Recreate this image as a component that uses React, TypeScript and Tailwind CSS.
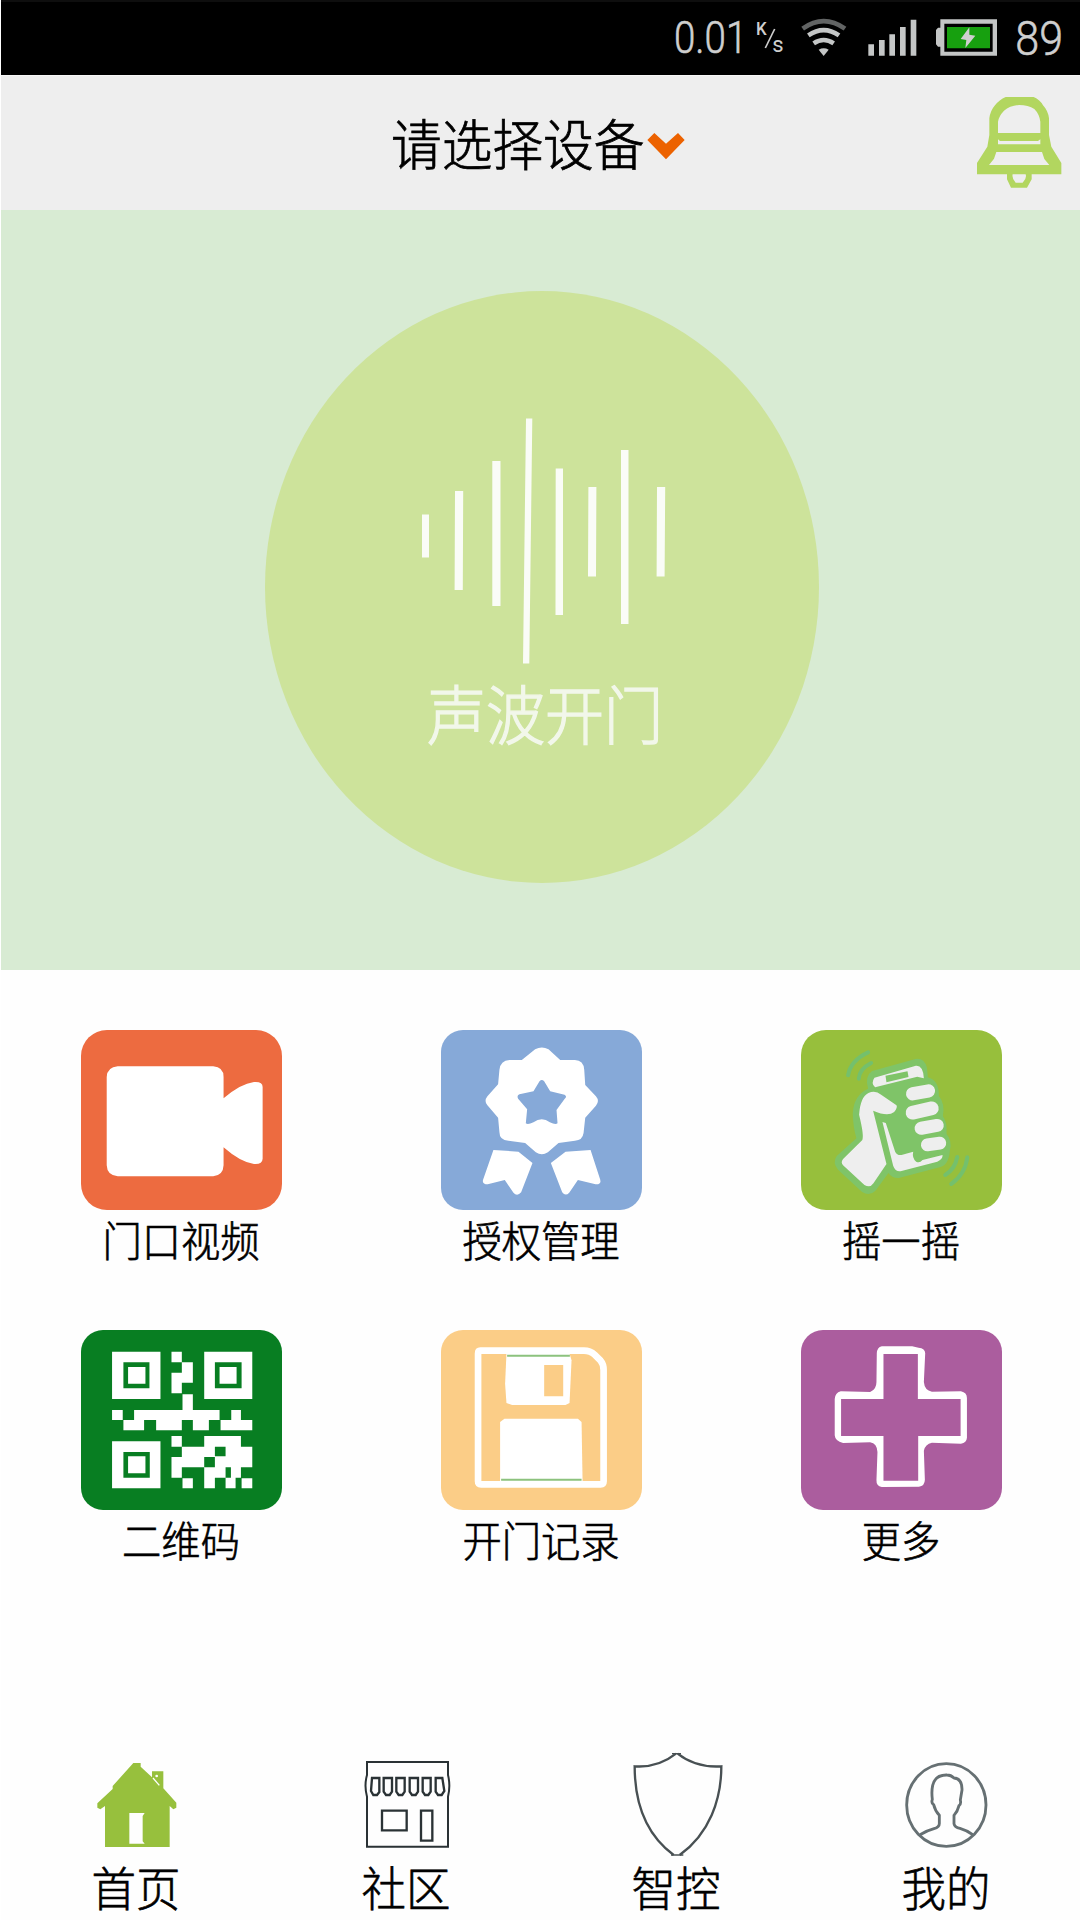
import type { ReactNode } from 'react';

const cjk = "font-['Noto_Sans_CJK_SC',sans-serif]";

function StatusBar() {
  return (
    <div className="flex h-[75px] items-start justify-end border-t-2 border-[#0e0e0e] bg-black pr-[17px] font-['Roboto',sans-serif] font-light text-[#cfcfcf]">
      <span className="mt-[8px] origin-center scale-y-[1.13] text-[38.500px] leading-[56px] [-webkit-text-stroke:0.5px_#cfcfcf]">0.01</span>
      <svg className="mt-[16px] ml-[8px] h-[38px] w-[30px]" viewBox="345 54 90 114" fill="#cfcfcf">
        <text x="348" y="106" fontSize="54" fontWeight="500" textLength="32" lengthAdjust="spacingAndGlyphs">K</text>
        <path d="M376 144L404 87" stroke="#cfcfcf" strokeWidth="5" />
        <text x="397" y="157" fontSize="66" fontWeight="400">s</text>
      </svg>
      <svg className="mt-[16px] ml-[16px] h-[39px] w-[46px]" viewBox="483 54 138 117" fill="none" stroke="#c4c6c6" strokeWidth="14">
        <path d="M488 86Q551 41 615 86" stroke="#626464" />
        <path d="M505 106Q551 75 597 106" />
        <path d="M521 130Q551 110 581 130" />
        <path d="M536 149Q551 141 566 149L551 168Z" fill="#c4c6c6" stroke="none" />
      </svg>
      <svg className="mt-[17px] ml-[21px] h-[37px] w-[49px]" viewBox="685 57 147 111" fill="#c4c6c6">
        <path d="M686 133h17v34h-17zM718 120h17v47h-17zM749 103h17v64h-17zM781 81h17v86h-17zM813 59h17v108h-17z" />
      </svg>
      <svg className="mt-[17px] ml-[19px] h-[37px] w-[61px]" viewBox="888 57 183 111">
        <path d="M901 58h170v109H901v-27h-7l-6-7V90l6-7h7z" fill="#c4c6c6" />
        <path d="M913 71h145v84H913z" fill="#000" />
        <path d="M921 81h129v64H921z" fill="#17a00f" />
        <path d="M988 82L962 117L979 120L976 144L1006 107L988 104Z" fill="#cfcfcf" />
      </svg>
      <span className="mt-[8px] ml-[18px] scale-y-[1.1] text-[43px] leading-[56px] [-webkit-text-stroke:0.5px_#cfcfcf]">89</span>
    </div>
  );
}

function Header() {
  return (
    <header className="flex h-[135px] items-start border-t border-[#f7f7f7] bg-[#eeeeee]">
      <div className="w-[390px]" />
      <h1 className="mt-[25px] scale-y-[1.07] text-[50.700px] font-light leading-[80px] text-black [-webkit-text-stroke:0.7px_#000]">请选择设备</h1>
      <svg className="mt-[56px] ml-[3px] h-[28px] w-[38px]" viewBox="0 0 114 84" fill="#ec6200">
        <path d="M1 24L22 3L57 35L93 3L113 24L57 82Z" />
      </svg>
      <svg className="mt-[20px] ml-auto mr-[17px] h-[94px] w-[87px]" viewBox="1008 288 261 282" fill="#b2d65f" fillRule="evenodd">
        <path d="M1097 291H1181Q1200 299 1209 316Q1224 332 1227 355V405L1234 440L1264 489V523H1175V538L1161 563H1113L1101 538V523H1011V489L1042 440L1048 405V355Q1051 332 1065 316Q1078 299 1097 291ZM1074 399H1201V365Q1198 342 1183 327Q1165 315 1137 315Q1110 317 1092 332Q1076 349 1074 365ZM1074 418V433H1201V418L1194 423H1080ZM1069 456L1062 476L1047 495H1228L1213 477L1206 456ZM1118 523Q1115 536 1127 548H1148Q1161 536 1157 523Z" />
      </svg>
    </header>
  );
}

function WaveButton() {
  return (
    <section className="flex h-[760px] justify-center bg-[#d8ebd3] pt-[81px]">
      <button className="ml-[3px] flex h-[592px] w-[554px] flex-col items-center rounded-[50%] bg-[#cde39b] pt-[124px]">
        <svg className="h-[250px] w-[260px]" viewBox="412 415 260 250" fill="#fafcf7">
          <path d="M422 514.500h7v43h-7zM455 491h8.200l-.4 99h-8.200zM492.300 461h8.200v145h-8.200zM526 418.500h6.300l-3 245h-6.300zM555.700 468.500h7.300V615h-7.500zM588.400 487h8l-.4 89.500h-8zM621 450h7.500v174H621zM657 487h8.200l-.6 89.500h-8z" />
        </svg>
        <span className="mt-[7px] ml-[6px] scale-y-[1.08] text-[59px] font-light leading-[80px] text-[#f2f7ea] [-webkit-text-stroke:1.3px_#f2f7ea]">声波开门</span>
      </button>
    </section>
  );
}

function Tile({ label, color, children }: { label: string; color: string; children: ReactNode }) {
  return (
    <div className="flex h-[300px] flex-col items-center">
      <svg className={`h-[180px] w-[201px] ${color}`} viewBox="62 59 602 540" preserveAspectRatio="none">
        {children}
      </svg>
      <span className="-mt-px scale-y-[1.08] text-[39.300px] font-light leading-[60px] text-black [-webkit-text-stroke:0.6px_#000]">{label}</span>
    </div>
  );
}

function VideoIcon() {
  return (
    <path
      d="M172 168H458Q489 170 489 200V264Q540 220 580 215Q606 213 606 230V445Q605 463 580 461Q540 456 489 411V465Q488 495 458 498H172Q140 495 139 465V200Q141 170 172 168Z"
      fill="#fff"
    />
  );
}

function BadgeIcon() {
  return (
    <>
      <path
        d="M344 117Q364 106 384 117L419 149H463Q489 150 491 178L494 224L526 258Q538 272 526 286L494 322L489 368Q486 390 463 391L414 398L382 426Q364 438 346 426L314 398L264 391Q237 390 237 366L233 322L201 285Q190 272 201 258L233 222L237 178Q240 151 267 149H304Z"
        fill="#fff"
      />
      <path d="M357 213Q364 205 371 213L389 243L432 253Q441 258 432 266L408 299L411 339Q405 344 388 336Q364 318 339 336Q322 344 316 339L320 297L293 265Q288 256 297 252L339 243Z" fill="#86a9d8" />
      <path d="M219 419L294 424L336 458L302 546Q290 560 279 547L253 509L202 522Q184 522 188 508Z" fill="#fff" />
      <path d="M510 419L435 424L391 458L425 546Q435 559 446 547L472 509L525 522Q543 522 539 508Z" fill="#fff" />
    </>
  );
}

function ShakeIcon() {
  return (
    <>
      <path
        d="M275 182L405 146Q430 142 439 171L442 201Q476 210 475 257Q494 280 487 318Q500 335 498 371Q515 390 508 420Q505 465 477 471L355 503Q334 504 324 488L285 541Q268 558 245 545L173 478Q155 457 169 437L228 384Q218 350 217 310Q219 255 263 235Q252 197 275 182Z"
        fill="#7fc468"
      />
      <g fill="#eeeeee">
        <path d="M282 202L406 166Q428 164 430 204L410 199L284 231Q270 219 282 202Z" />
        <path d="M306 335L316 338L344 424Q350 436 363 434L398 424Q394 443 407 454Q417 460 426 449L486 434Q487 447 470 454L363 482Q345 486 338 466Z" />
        <path d="M264 248Q285 239 302 253L348 285Q352 292 341 305Q322 320 278 301L318 461L279 519Q269 534 252 524L188 465Q180 456 188 446L245 390Q252 378 236 313Q240 259 264 248Z" />
        <rect x="376" y="226" width="88" height="40" rx="20" transform="rotate(-10 420 246)" />
        <rect x="375" y="280" width="100" height="41" rx="20" transform="rotate(-13 425 301)" />
        <rect x="402" y="330" width="88" height="39" rx="20" transform="rotate(-10 446 350)" />
        <rect x="421" y="382" width="76" height="38" rx="19" transform="rotate(-8 459 401)" />
      </g>
      <path d="M315 196L381 183L384 200L318 216Z" fill="#7fc468" />
      <path d="M203 195Q210 151 263 126M235 205Q237 176 272 158M530 440Q523 476 494 494M560 441Q554 492 512 521" fill="none" stroke="#74c06c" strokeWidth="12" strokeLinecap="round" />
    </>
  );
}

function QrIcon() {
  return (
    <>
      <path
        d="M155 124H300V266H155zM431 124H575V266H431zM155 393H300V534H155zM333 124H364V156H397V217H364V249H333V187H364V156H333zM366 252H397V299H477V329H445V360H397V329H364V360H287V329H251V360H189V329H221V299H366zM155 299H187V329H155zM512 299H541V329H575V360H480V329H512zM333 377H364V409H333zM431 377H541V409H575V471H541V502H525V534H495V502H511V471H495V502H463V534H431V471H364V502H333V440H364V409H431zM366 504H397V534H366zM543 504H575V534H543z"
        fill="#fff"
      />
      <path d="M189 156H267V234H189zM463 156H543V234H463zM189 425H268V502H189zM463 409H495V438H463zM431 440H463V471H431z" fill="#087e22" />
      <path d="M203 170H255V220H203zM477 170H528V220H477zM203 438H255V489H203z" fill="#fff" />
    </>
  );
}

function DiskIcon() {
  return (
    <>
      <path d="M180 121H490Q509 121 522 133L540 151Q549 161 549 179V513Q549 522 540 522H182Q173 522 173 513V130Q173 121 180 121Z" fill="none" stroke="#fff" strokeWidth="20" />
      <path d="M258 130H447L453 150L447 278L435 284H275L258 278L254 220Z" fill="#fff" />
      <path d="M371 164H428V258H371Z" fill="#fbcd87" />
      <path d="M252 325H472L483 335L486 512H239V335Z" fill="#fff" />
      <path d="M260 136H448M242 508H483" stroke="#8cc27e" strokeWidth="6" />
    </>
  );
}

function PlusIcon() {
  return (
    <>
      <path
        d="M304 108L395 108L414 112Q434 114 434 129L430 215Q432 240 454 244L541 243Q559 247 559 263V382Q558 397 541 400L454 397Q434 401 430 421L433 508Q433 526 415 529L304 530Q287 527 288 509L291 425Q290 400 269 396L188 398Q164 392 163 375V266Q164 248 181 243L269 245Q288 238 288 215L289 129Q290 111 304 108Z"
        fill="#fff"
      />
      <path d="M309 131H412V266H540V377H413V511H309V377H182V266H309Z" fill="#ab5d9e" />
    </>
  );
}

function HomeIcon() {
  return (
    <svg className="h-[110px] w-[100px]" viewBox="78 30 300 330">
      <path d="M220 69H242V80L276 112V94H310V145L349 188V203L340 208L329 198V321H135V198L121 208L112 203V190L158 147V138ZM208 219V311H254L248 304V228L254 219Z" fill="#97c03d" fillRule="evenodd" />
      <path d="M279 114L298 136" stroke="#fff" strokeWidth="4" />
      <circle cx="290" cy="108" r="4" fill="#fff" />
    </svg>
  );
}

function ShopIcon() {
  return (
    <svg className="h-[110px] w-[100px]" viewBox="888 30 300 330" fill="none" stroke="#2a3235" strokeWidth="7">
      <path d="M921 66H1164V105Q1172 137 1164 170V320H921V170Q912 137 921 105Z" strokeWidth="6" />
      <path d="M936 114H958V156L951 165H940L933 153ZM971 114H996V155L989 165H978L971 155ZM1009 114H1034V155L1027 165H1016L1009 155ZM1049 114H1074V155L1067 165H1056L1049 155ZM1088 114H1112V155L1105 165H1095L1088 155ZM1127 114H1147L1153 153L1145 165H1134L1127 155Z" />
      <path d="M966 212H1040V271H966ZM1083 212H1117V302H1083Z" />
    </svg>
  );
}

function ShieldIcon() {
  return (
    <svg className="h-[110px] w-[100px]" viewBox="138 30 300 330" fill="none" stroke="#485053" strokeWidth="7">
      <path d="M288 41Q234 84 164 79C164 181 193 280 281 345M293 41Q347 84 424 79C424 178 389 280 299 345" />
      <path d="M276 41H303M273 345H310" strokeWidth="4" />
    </svg>
  );
}

function UserIcon() {
  return (
    <svg className="h-[110px] w-[100px]" viewBox="948 30 300 330" fill="none" stroke="#667073" strokeWidth="8.500">
      <ellipse cx="1099" cy="195" rx="119" ry="124" />
      <path d="M1020 284Q1040 272 1062 266Q1079 261 1078 249V226Q1065 212 1061 194Q1053 190 1057 178Q1054 155 1058 136Q1066 104 1101 105Q1113 105 1122 114Q1147 116 1146 150L1141 180Q1144 192 1137 197Q1133 214 1122 226V251Q1124 262 1140 265Q1161 271 1178 284" />
    </svg>
  );
}

const tiles = [
  { label: '门口视频', color: 'rounded-[26px] bg-[#ed6b40]', icon: <VideoIcon /> },
  { label: '授权管理', color: 'rounded-[22px] bg-[#86a9d8]', icon: <BadgeIcon /> },
  { label: '摇一摇', color: 'rounded-[25px] bg-[#97bf3c]', icon: <ShakeIcon /> },
  { label: '二维码', color: 'rounded-[22px] bg-[#087e22]', icon: <QrIcon /> },
  { label: '开门记录', color: 'rounded-[22px] bg-[#fbcd87]', icon: <DiskIcon /> },
  { label: '更多', color: 'rounded-[22px] bg-[#ab5d9e]', icon: <PlusIcon /> },
];

const tabs = [
  { label: '首页', icon: <HomeIcon /> },
  { label: '社区', icon: <ShopIcon /> },
  { label: '智控', icon: <ShieldIcon /> },
  { label: '我的', icon: <UserIcon /> },
];

export default function App() {
  return (
    <div className={`flex h-[1920px] w-[1080px] flex-col overflow-hidden border-l border-white bg-[#fefefe] ${cjk}`}>
      <StatusBar />
      <Header />
      <WaveButton />
      <main className="grid w-[1080px] grid-cols-3 pt-[59.500px]">
        {tiles.map((t) => (
          <Tile key={t.label} label={t.label} color={t.color}>
            {t.icon}
          </Tile>
        ))}
      </main>
      <nav className="mt-auto grid h-[170px] w-[1080px] grid-cols-4">
        {tabs.map((t) => (
          <a key={t.label} className="flex flex-col items-center">
            {t.icon}
            <span className="-mt-[2px] scale-y-[1.06] text-[44.500px] font-light leading-[56px] text-black [-webkit-text-stroke:0.6px_#000]">{t.label}</span>
          </a>
        ))}
      </nav>
    </div>
  );
}
